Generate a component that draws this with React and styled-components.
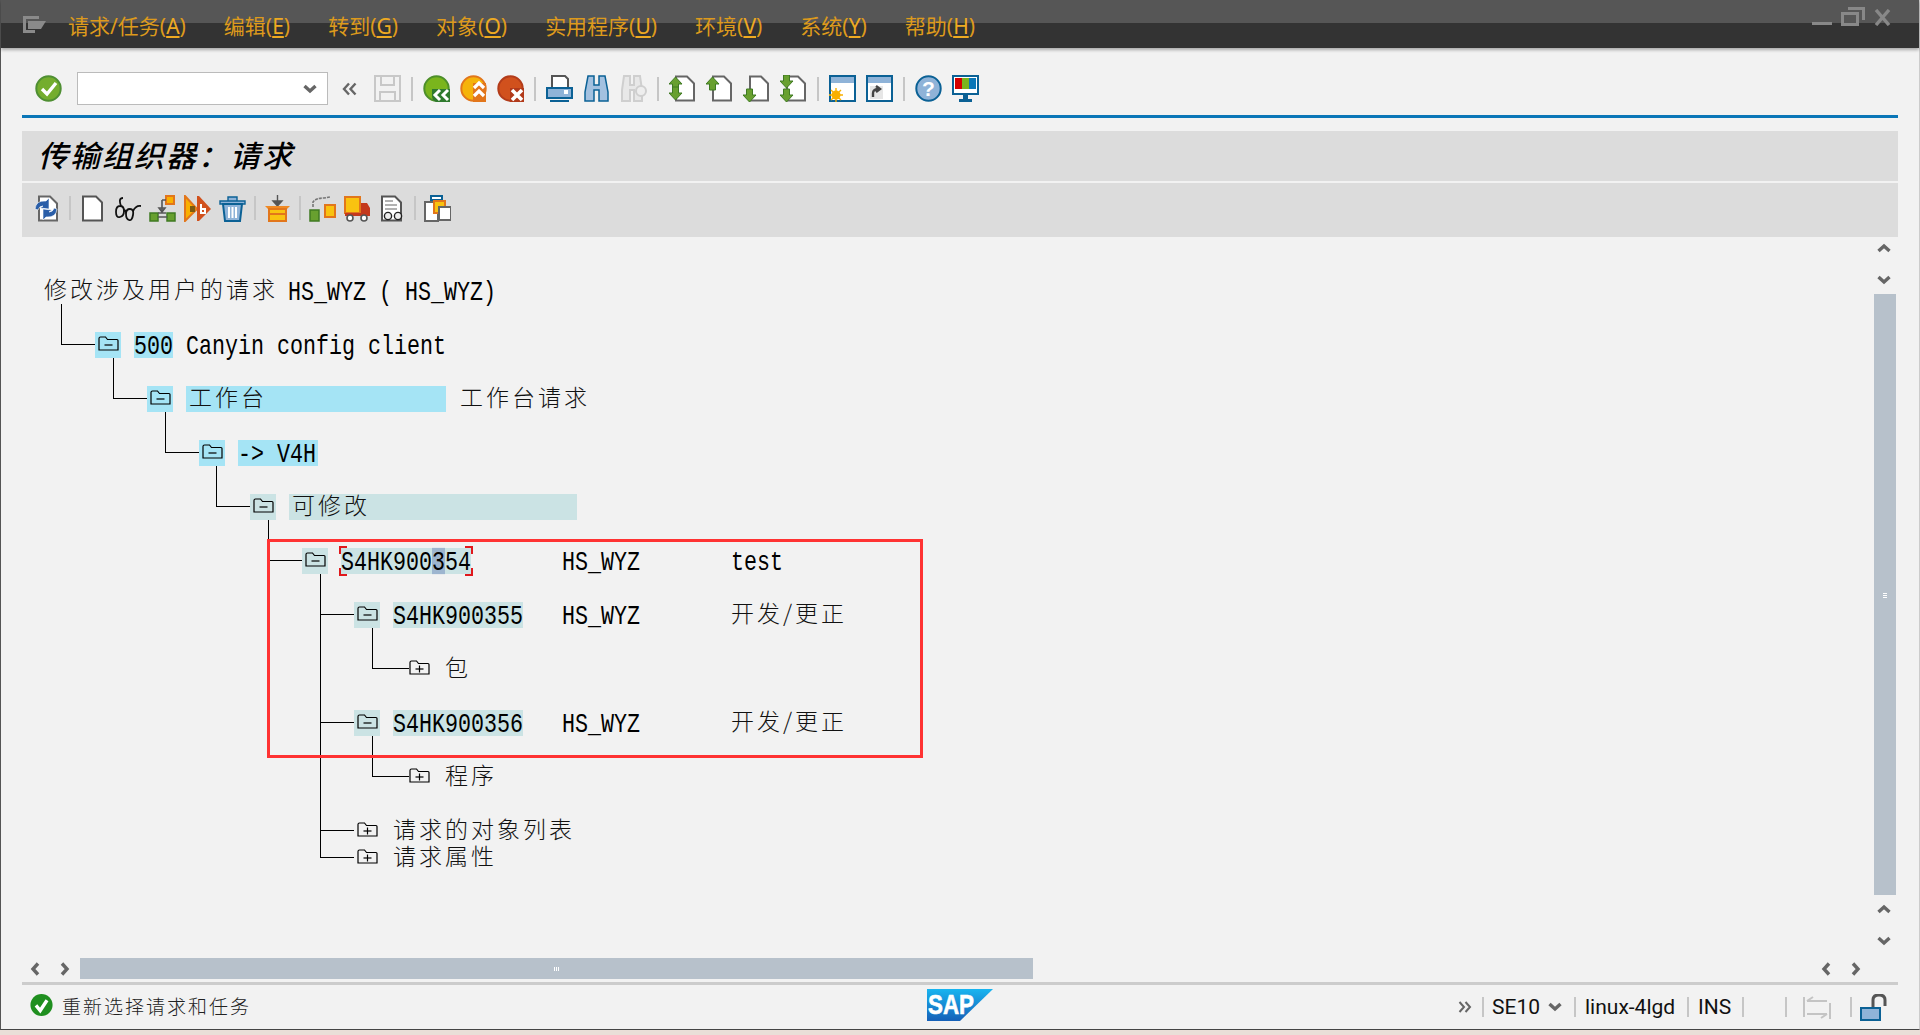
import React from 'react';
import styled, { createGlobalStyle } from 'styled-components';

const GlobalStyle = createGlobalStyle`
  html, body {
    margin: 0;
    padding: 0;
    height: 100%;
    overflow: hidden;
    background: #eadfd8;
    font-family: "Noto Sans", "Noto Sans CJK SC", sans-serif;
  }
`;

const Window = styled.div`
  display: flex;
  flex-direction: column;
  box-sizing: border-box;
  height: 1030px;
  background: #f2f2f2;
  border-left: 1px solid #555;
  border-right: 1px solid #ccc;
  border-bottom: 1px solid #444;
`;

const MenuBar = styled.div`
  display: flex;
  align-items: center;
  flex: 0 0 48px;
  box-sizing: border-box;
  padding: 0 0 0 21px;
  background: linear-gradient(#565656 0, #565656 23px, #333 23px, #333 100%);
  box-shadow: 0 2px 3px rgba(0, 0, 0, 0.3);
`;

const MenuItems = styled.nav`
  display: flex;
  gap: 38px;
  margin-left: 22px;
  margin-top: 4px;
`;

const MenuItem = styled.span`
  font-size: 21px;
  line-height: 28px;
  color: #dd9a1c;
  white-space: nowrap;

  u {
    color: #eeaa22;
    text-underline-offset: 2px;
  }
`;

const WindowControls = styled.div`
  display: flex;
  align-items: flex-end;
  margin-left: auto;
  gap: 9px;
  padding: 0 28px 15px 0;
`;

const Toolbar = styled.div`
  display: flex;
  align-items: center;
  flex: 0 0 67px;
  box-sizing: border-box;
  padding: 14px 0 0 34px;
  gap: 10px;
`;

const ComboBox = styled.div`
  display: flex;
  align-items: center;
  justify-content: flex-end;
  box-sizing: border-box;
  width: 251px;
  height: 33px;
  margin-left: 5px;
  padding-right: 10px;
  background: #fff;
  border: 1px solid #bbb;
`;

const Rewind = styled.span`
  display: flex;
  margin: 0 7px 0 4px;
`;

const Rule = styled.div`
  flex: 0 0 3px;
  margin: 0 21px;
  background: #0a76b7;
`;

const TitleBand = styled.h1`
  flex: 0 0 50px;
  margin: 13px 21px 2px;
  padding-left: 16px;
  background: #dcdcdc;
  font-size: 30px;
  line-height: 50px;
  font-weight: 500;
  font-style: italic;
  letter-spacing: 2px;
  color: #000;
`;

const AppToolbar = styled.div`
  display: flex;
  align-items: center;
  flex: 0 0 54px;
  box-sizing: border-box;
  margin: 0 21px;
  padding: 0 0 4px 12px;
  gap: 8px;
  background: #dcdcdc;
`;

const Separator = styled.span`
  flex: 0 0 2px;
  height: ${({ $h }) => $h || 24}px;
  margin-left: ${({ $ml }) => $ml || 0}px;
  margin-right: ${({ $mr }) => $mr || 0}px;
  background: #c6c6c6;
`;

const Glyph = styled.svg`
  flex: none;
  display: block;
  width: ${({ $w }) => $w || 27}px;
  height: ${({ $h }) => $h || 27}px;
`;

const Body = styled.div`
  display: flex;
  flex: 1;
  min-height: 0;
`;

const Tree = styled.div`
  position: relative;
  flex: 1;
  padding-top: 27px;
`;

const RedBox = styled.div`
  position: absolute;
  left: 266px;
  top: 302px;
  width: 650px;
  height: 213px;
  border: 3px solid #f33;
`;

const Row = styled.div`
  position: relative;
  display: flex;
  align-items: center;
  box-sizing: border-box;
  height: ${({ $h }) => $h || 54}px;
  margin-top: ${({ $mt }) => $mt || 0}px;
  padding-left: ${({ $x }) => $x}px;
  white-space: nowrap;
`;

const Elbow = styled.span`
  position: absolute;
  left: ${({ $x }) => $x - 34}px;
  bottom: 50%;
  width: ${({ $w }) => $w || 33}px;
  height: ${({ $up }) => $up}px;
  border-left: 1px solid #000;
  border-bottom: 1px solid #000;
`;

const FolderCell = styled.span`
  display: flex;
  align-items: center;
  justify-content: center;
  flex: 0 0 26px;
  box-sizing: border-box;
  height: 26px;
  margin-right: 13px;
  padding-bottom: 3px;
  background: ${({ $bg }) => $bg || 'transparent'};
`;

const Slot = styled.span`
  display: inline-flex;
  flex: 0 0 ${({ $w }) => $w}px;
`;

const Label = styled.span`
  position: relative;
  display: inline-flex;
  align-items: center;
  height: 26px;
  width: ${({ $w }) => ($w ? `${$w}px` : 'auto')};
  background: ${({ $bg }) => $bg || 'transparent'};
  padding-left: ${({ $pl }) => $pl || 0}px;
  box-sizing: border-box;
`;

const Mono = styled.span`
  display: inline-block;
  font-family: "Liberation Mono", monospace;
  font-size: 21.67px;
  line-height: 21px;
  color: #000;
  white-space: pre;
  transform: translateY(2px) scaleY(1.25);
`;

const HeadMono = styled(Mono)`
  margin-left: -3px;
`;

const Han = styled.span`
  font-family: "Noto Sans CJK SC", sans-serif;
  font-size: 23px;
  line-height: 26px;
  font-weight: 300;
  letter-spacing: 3px;
  color: #111;
  margin-bottom: 6px;
`;

const Caret = styled.span`
  position: relative;
  display: inline-block;
  height: 21px;

  &::before {
    content: "";
    position: absolute;
    left: 0;
    right: 0;
    top: -1.6px;
    bottom: 1.6px;
    z-index: -1;
    background: #9db5cf;
  }
`;

const FocusMark = styled.span`
  position: absolute;
  left: -2px;
  right: -2px;
  top: -2px;
  bottom: -2px;
  --c: #e0181c;
  background:
    linear-gradient(var(--c), var(--c)) 0 0 / 8px 2px,
    linear-gradient(var(--c), var(--c)) 0 0 / 2px 8px,
    linear-gradient(var(--c), var(--c)) 100% 0 / 8px 2px,
    linear-gradient(var(--c), var(--c)) 100% 0 / 2px 8px,
    linear-gradient(var(--c), var(--c)) 0 100% / 8px 2px,
    linear-gradient(var(--c), var(--c)) 0 100% / 2px 8px,
    linear-gradient(var(--c), var(--c)) 100% 100% / 8px 2px,
    linear-gradient(var(--c), var(--c)) 100% 100% / 2px 8px;
  background-repeat: no-repeat;
`;

const VScroll = styled.div`
  display: flex;
  flex-direction: column;
  align-items: center;
  flex: 0 0 45px;
  box-sizing: border-box;
  padding: 6px 23px 0 0;
`;

const ChevronPair = styled.div`
  display: flex;
  flex-direction: ${({ $row }) => ($row ? 'row' : 'column')};
  align-items: center;
  gap: ${({ $gap }) => $gap}px;
  margin-right: ${({ $mr }) => $mr || 0}px;
`;

const VThumb = styled.div`
  display: flex;
  align-items: center;
  justify-content: center;
  flex: 0 0 601px;
  width: 22px;
  margin: 9px 0;
  background: #b7c1cb;
`;

const ScrollRow = styled.div`
  display: flex;
  align-items: center;
  flex: 0 0 21px;
  padding-left: 29px;
`;

const HThumb = styled.div`
  display: flex;
  align-items: center;
  justify-content: center;
  flex: 0 0 953px;
  height: 21px;
  margin-left: 10px;
  background: #b7c1cb;
`;

const RowEnd = styled.div`
  margin-left: auto;
  padding-right: 58px;
`;

const Grip = styled.span`
  width: ${({ $v }) => ($v ? 4 : 6)}px;
  height: ${({ $v }) => ($v ? 6 : 4)}px;
  background: repeating-linear-gradient(
    ${({ $v }) => ($v ? '0deg' : '90deg')},
    #fff 0 1px,
    #b7c1cb 1px 2px
  );
`;

const StatusRule = styled.div`
  flex: 0 0 3px;
  margin: 3px 21px 0;
  background: #ccc;
`;

const StatusBar = styled.div`
  display: flex;
  align-items: center;
  flex: 0 0 44px;
  box-sizing: border-box;
  padding: 0 31px 4px 29px;
`;

const StatusText = styled.span`
  margin-left: 9px;
  font-family: "Noto Sans CJK SC", sans-serif;
  font-size: 19px;
  letter-spacing: 2px;
  font-weight: 300;
  color: #222;
`;

const LogoSlot = styled.div`
  margin-left: 676px;
  height: 32px;
`;

const StatusRight = styled.div`
  display: flex;
  align-items: center;
  margin-left: auto;
  margin-top: 4px;
  font-family: Roboto, sans-serif;
  font-size: 21px;
  color: #111;
`;

const StatusField = styled.span`
  flex: none;
  width: ${({ $w }) => $w}px;
  margin-left: ${({ $l }) => $l}px;
  margin-right: ${({ $r }) => $r || 0}px;
  line-height: 28px;
  white-space: nowrap;
`;

const Ico = ({ children, w, h, vb }) => (
  <Glyph $w={w} $h={h} viewBox={vb || `0 0 ${w || 27} ${h || 27}`}>{children}</Glyph>
);

const Ball = ({ fill, edge }) => <circle cx="13.5" cy="13.5" r="12.2" fill={fill} stroke={edge} strokeWidth="2" />;

const Doc = ({ edge = '#666', x = 7 }) => (
  <path d={`M${x} 1.5h11l7 7v17h-18z`} fill="#fff" stroke={edge} strokeWidth="2" />
);

const UpArrow = ({ x, y, flip }) => (
  <path
    d={flip ? `M${x} ${y}l6.5 7 6.5-7h-3.5v-6h-6v6z` : `M${x} ${y}l6.5-7 6.5 7h-3.5v6h-6v-6z`}
    fill="#68a02f"
    stroke="#3f7a22"
    strokeWidth="1"
  />
);

const icons = {
  check: (
    <>
      <Ball fill="#74ad2e" edge="#4f8f33" />
      <path d="M7 14l5 5 9-11" fill="none" stroke="#fff" strokeWidth="3.4" />
    </>
  ),
  back: (
    <>
      <Ball fill="#7ab51d" edge="#4d8f2a" />
      <path d="M9 14h18v13H13q-4-2-4-6z" fill="#2f7a2e" />
      <path d="M17 15l-5 5 5 5M25 15l-5 5 5 5" fill="none" stroke="#fff" strokeWidth="3" />
    </>
  ),
  exit: (
    <>
      <Ball fill="#f5b30a" edge="#e2761b" />
      <path d="M13 8h13v19H13z" fill="#e2761b" />
      <path d="M14 13l5-5 5 5M14 21l5-5 5 5" fill="none" stroke="#fff" strokeWidth="3.2" />
    </>
  ),
  cancel: (
    <>
      <Ball fill="#d1511d" edge="#b33c1a" />
      <path d="M13 13h14v14H13z" fill="#b23a1a" />
      <path d="M15 15l10 10M25 15l-10 10" stroke="#fff" strokeWidth="3.6" />
    </>
  ),
  save: (
    <path
      d="M1 1h25v25H1zM7 2v8h13V2M6 26V17h15v9"
      fill="none"
      stroke="#c8c8c8"
      strokeWidth="2"
    />
  ),
  print: (
    <>
      <path d="M6 1h13l3 3v9H6z" fill="#fff" stroke="#555" strokeWidth="2" />
      <path d="M1 13h25v10H1z" fill="#8fb3d8" stroke="#0b6195" strokeWidth="2" />
      <path d="M18 15h4v4h-4z" fill="#fff" />
      <path d="M4 25h19v2H4z" fill="#0b6195" />
    </>
  ),
  find: (
    <path
      d="M5 1h6v9h5V1h6l3 16v9h-9V15h-5v11H2v-9z"
      fill="#a3c1e0"
      stroke="#0b6195"
      strokeWidth="1.5"
    />
  ),
  findNext: (
    <>
      <path d="M4 1h6v9h4V1h6l2 14v11h-8V15h-4v11H2V15z" fill="#e8e8e8" stroke="#cfcfcf" strokeWidth="2" />
      <circle cx="21" cy="16" r="5" fill="#eee" stroke="#cfcfcf" strokeWidth="2" />
    </>
  ),
  pageBoth: (
    <>
      <Doc />
      <UpArrow x={0} y={9} />
      <UpArrow x={0} y={18} flip />
    </>
  ),
  pageUp: (
    <>
      <Doc />
      <UpArrow x={0} y={9} />
    </>
  ),
  pageDown: (
    <>
      <Doc />
      <UpArrow x={0} y={20} flip />
    </>
  ),
  pageEnds: (
    <>
      <Doc />
      <UpArrow x={0} y={6} flip />
      <UpArrow x={0} y={20} flip />
    </>
  ),
  newWindow: (
    <>
      <path d="M1 1h25v25H1z" fill="#fff" stroke="#0b6195" strokeWidth="2" />
      <path d="M2 2h23v6H2z" fill="#8fb3d8" />
      <circle cx="7" cy="20" r="4.5" fill="#f9b000" />
      <path d="M7 13v14M0 20h14M2 15l10 10M12 15L2 25" stroke="#f9b000" strokeWidth="1.4" />
    </>
  ),
  linkWindow: (
    <>
      <path d="M1 1h25v25H1z" fill="#fff" stroke="#0b6195" strokeWidth="2" />
      <path d="M2 2h23v6H2z" fill="#8fb3d8" />
      <path d="M4 11h13v13H4z" fill="#e6e6e6" />
      <path d="M7 22v-4q0-4 6-4M10 11l4 3-4 3" fill="none" stroke="#444" strokeWidth="2.4" />
    </>
  ),
  help: (
    <>
      <Ball fill="#8fb3d8" edge="#0b6195" />
      <text x="13.5" y="21" textAnchor="middle" fontFamily="Liberation Sans" fontWeight="700" fontSize="21" fill="#fff">?</text>
    </>
  ),
  monitor: (
    <>
      <path d="M1 1h25v18H1z" fill="#fff" stroke="#0b6195" strokeWidth="2" />
      <path d="M3 3h7v11H3z" fill="#d40000" />
      <path d="M10 3h7v11h-7z" fill="#7ab51d" />
      <path d="M17 3h7v11h-7z" fill="#0a76b7" />
      <path d="M11 20h5v4h-5zM7 24h13v3H7z" fill="#0b6195" />
    </>
  ),
  refresh: (
    <>
      <Doc x={5} />
      <path d="M1 14q1-9 11-8l3-3v11l-9-1 3-2q-4 0-5 4zM23 14q-1 9-11 8l-3 3v-11l9 1-3 2q4 0 5-4z" fill="#2a5ea8" stroke="#fff" strokeWidth="0.6" />
    </>
  ),
  doc: <path d="M4 1.5h13l6 6v18H4z" fill="#fff" stroke="#555" strokeWidth="2" />,
  glasses: (
    <path
      d="M2 17q0-6 4-6t4 5-4 6-4-5zM12 19q0-5 4-5t3 6-4 5-3-6zM7 11q-3-8 2-8M10 16q2-2 2 3M19 16q3-6 8-5"
      fill="none"
      stroke="#111"
      strokeWidth="1.8"
    />
  ),
  tree: (
    <>
      <path d="M17 1h8v8h-8z" fill="#f9b000" stroke="#e2761b" strokeWidth="2" />
      <path d="M1 18h8v8H1zM18 18h8v8h-8z" fill="#68a02f" stroke="#3f7a22" strokeWidth="1.5" />
      <path d="M13 5h4M13 5v13M9 22h9M9 18h8M10 13h6l-3 4z" fill="none" stroke="#555" strokeWidth="1.6" />
    </>
  ),
  transport: (
    <>
      <path d="M1 1l12 13L1 26z" fill="#f9b000" stroke="#e2761b" strokeWidth="2" />
      <path d="M13 1h2l12 13-12 12h-2z" fill="#d1511d" />
      <path d="M6 11h5v6H6z" fill="#7a5a10" />
      <path d="M17 9v9h4v-4h-4" fill="none" stroke="#fff" strokeWidth="2" />
    </>
  ),
  trash: (
    <>
      <path d="M1 6h25v3H1zM9 2h9v4H9z" fill="#8fb3d8" stroke="#0b6195" strokeWidth="1.4" />
      <path d="M4 9h19l-2 17H6z" fill="#8fb3d8" stroke="#0b6195" strokeWidth="2" />
      <path d="M10 12v11M13.5 12v11M17 12v11" stroke="#fff" strokeWidth="2" />
    </>
  ),
  importBox: (
    <>
      <path d="M13.5 0v9M9 6l4.5 5 4.5-5z" fill="#555" stroke="#555" strokeWidth="1.4" />
      <path d="M1 11h25l-4 4H5z" fill="#f08a24" />
      <path d="M5 14h17v12H5z" fill="#f9c310" stroke="#e2761b" strokeWidth="2" />
      <path d="M6 18h15v2H6z" fill="#e2761b" />
    </>
  ),
  assign: (
    <>
      <path d="M1 15h9v11H1z" fill="#68a02f" stroke="#3f7a22" strokeWidth="1.5" />
      <path d="M16 10h10v12H16z" fill="#f9c310" stroke="#e2761b" strokeWidth="2" />
      <path d="M4 12V7q3-4 11-4l6-1" fill="none" stroke="#777" strokeWidth="1.6" strokeDasharray="3 1" />
    </>
  ),
  truck: (
    <>
      <path d="M1 2h15v16H1z" fill="#f9c310" stroke="#e2761b" strokeWidth="2" />
      <path d="M17 8h6l3 5v8H17zM1 18h17v3H1z" fill="#c4391d" />
      <circle cx="6" cy="23" r="3" fill="#fff" stroke="#555" strokeWidth="1.6" />
      <circle cx="20" cy="23" r="3" fill="#fff" stroke="#555" strokeWidth="1.6" />
    </>
  ),
  docGlasses: (
    <>
      <path d="M3 1.5h13l6 6v18H3z" fill="#fff" stroke="#555" strokeWidth="2" />
      <path d="M6 6h8M6 10h12M6 14h12" stroke="#999" strokeWidth="1.6" />
      <circle cx="9" cy="21" r="3.6" fill="#eee" stroke="#222" strokeWidth="1.4" />
      <circle cx="19" cy="21" r="3.6" fill="#eee" stroke="#222" strokeWidth="1.4" />
    </>
  ),
  copy: (
    <>
      <path d="M1 7h13v19H1z" fill="#fff" stroke="#666" strokeWidth="2" />
      <path d="M7 1h11v4H7z" fill="#fff" stroke="#0b6195" strokeWidth="2" />
      <path d="M10 6h11v12H10z" fill="#f9c310" stroke="#e2761b" strokeWidth="2" />
      <path d="M15 12h12v13H15z" fill="#fff" stroke="#666" strokeWidth="2" />
    </>
  ),
};

const Icon = ({ name }) => <Ico>{icons[name]}</Ico>;

const Chevron = ({ dir, color = '#666' }) => {
  const paths = {
    up: 'M1.5 8L7 3l5.5 5',
    down: 'M1.5 2L7 7l5.5-5',
    left: 'M8 1.5L3 7l5 5.5',
    right: 'M3 1.5L8 7l-5 5.5',
  };
  const flat = dir === 'up' || dir === 'down';
  return (
    <Ico w={flat ? 14 : 11} h={flat ? 10 : 14}>
      <path d={paths[dir]} fill="none" stroke={color} strokeWidth="3.4" />
    </Ico>
  );
};

const Folder = ({ open }) => (
  <Ico w={21} h={15}>
    <path d="M1 14V2.500q0-1.500 1.500-1.500h5l2 2.500h9.500q1 0 1 1V14z" fill="none" stroke="#000" strokeWidth="1.2" />
    <path d="M6.500 9h8" stroke="#000" strokeWidth="1.200" />
    {!open && <path d="M10.500 5.500v7" stroke="#000" strokeWidth="1.200" />}
  </Ico>
);

const menus = [
  ['请求/任务(', 'A'],
  ['编辑(', 'E'],
  ['转到(', 'G'],
  ['对象(', 'O'],
  ['实用程序(', 'U'],
  ['环境(', 'V'],
  ['系统(', 'Y'],
  ['帮助(', 'H'],
];

const CYAN = '#a5e4f5';
const TEAL = '#cbe3e4';
const levelX = level => Math.round(94 + 51.8 * (level - 1));

const Owner = () => (
  <Slot $w={169}>
    <Mono>HS_WYZ</Mono>
  </Slot>
);

const App = () => (
  <>
    <GlobalStyle />
    <Window>
      <MenuBar>
        <Ico w={24} h={19}>
          <path d="M1 1h16v3H4v11h9v3H1z" fill="#8a8a8a" />
          <path d="M6 6h18l-5 8H6z" fill="#8a8a8a" />
        </Ico>
        <MenuItems>
          {menus.map(([text, key]) => (
            <MenuItem key={key}>
              {text}
              <u>{key}</u>)
            </MenuItem>
          ))}
        </MenuItems>
        <WindowControls>
          <Ico w={20} h={4}><path d="M0 0h20v3H0z" fill="#888" /></Ico>
          <Ico w={24} h={19}>
            <path d="M7 1.500h15.500V13M1.500 6.500h15v11h-15z" fill="none" stroke="#888" strokeWidth="3" />
          </Ico>
          <Ico w={17} h={17}>
            <path d="M2 1l13 15M15 1L2 16" stroke="#888" strokeWidth="3.400" />
          </Ico>
        </WindowControls>
      </MenuBar>

      <Toolbar>
        <Icon name="check" />
        <ComboBox><Chevron dir="down" /></ComboBox>
        <Rewind>
          <Ico w={15} h={14}>
            <path d="M7 1.500L2 7l5 5.500M13.500 1.500L8.500 7l5 5.500" fill="none" stroke="#666" strokeWidth="2.400" />
          </Ico>
        </Rewind>
        <Icon name="save" />
        <Separator />
        <Icon name="back" />
        <Icon name="exit" />
        <Icon name="cancel" />
        <Separator />
        <Icon name="print" />
        <Icon name="find" />
        <Icon name="findNext" />
        <Separator />
        <Icon name="pageBoth" />
        <Icon name="pageUp" />
        <Icon name="pageDown" />
        <Icon name="pageEnds" />
        <Separator />
        <Icon name="newWindow" />
        <Icon name="linkWindow" />
        <Separator />
        <Icon name="help" />
        <Icon name="monitor" />
      </Toolbar>
      <Rule />

      <TitleBand>传输组织器：请求</TitleBand>
      <AppToolbar>
        <Icon name="refresh" />
        <Separator />
        <Icon name="doc" />
        <Icon name="glasses" />
        <Icon name="tree" />
        <Icon name="transport" />
        <Icon name="trash" />
        <Separator />
        <Icon name="importBox" />
        <Separator />
        <Icon name="assign" />
        <Icon name="truck" />
        <Icon name="docGlasses" />
        <Separator />
        <Icon name="copy" />
      </AppToolbar>

      <Body>
        <Tree>
          <Row $x={43}>
            <Han>修改涉及用户的请求</Han>
            <HeadMono> HS_WYZ ( HS_WYZ)</HeadMono>
          </Row>
          <Row $x={levelX(1)}>
            <Elbow $x={levelX(1)} $up={40} />
            <FolderCell $bg={CYAN}><Folder open /></FolderCell>
            <Label $bg={CYAN}><Mono>500</Mono></Label>
            <Mono> Canyin config client</Mono>
          </Row>
          <Row $x={levelX(2)}>
            <Elbow $x={levelX(2)} $up={40} />
            <FolderCell $bg={CYAN}><Folder open /></FolderCell>
            <Label $bg={CYAN} $w={260} $pl={3}><Han>工作台</Han></Label>
            <Label $pl={14}><Han>工作台请求</Han></Label>
          </Row>
          <Row $x={levelX(3)}>
            <Elbow $x={levelX(3)} $up={40} />
            <FolderCell $bg={CYAN}><Folder open /></FolderCell>
            <Label $bg={CYAN} $w={80}><Mono>-&gt; V4H</Mono></Label>
          </Row>
          <Row $x={levelX(4)}>
            <Elbow $x={levelX(4)} $up={40} />
            <FolderCell $bg={TEAL}><Folder open /></FolderCell>
            <Label $bg={TEAL} $w={288} $pl={3}><Han>可修改</Han></Label>
          </Row>
          <Row $x={levelX(5)}>
            <Elbow $x={levelX(5)} $up={40} />
            <FolderCell $bg={TEAL}><Folder open /></FolderCell>
            <Slot $w={221}>
              <Label $bg={TEAL} $w={130}>
                <FocusMark />
                <Mono>S4HK900<Caret>3</Caret>54</Mono>
              </Label>
            </Slot>
            <Owner />
            <Mono>test</Mono>
          </Row>
          <Row $x={levelX(6)}>
            <Elbow $x={levelX(6)} $up={1} />
            <FolderCell $bg={TEAL}><Folder open /></FolderCell>
            <Slot $w={169}>
              <Label $bg={TEAL} $w={130}><Mono>S4HK900355</Mono></Label>
            </Slot>
            <Owner />
            <Han>开发/更正</Han>
          </Row>
          <Row $x={levelX(7)}>
            <Elbow $x={levelX(7)} $up={40} $w={36} />
            <FolderCell><Folder /></FolderCell>
            <Han>包</Han>
          </Row>
          <Row $x={levelX(6)}>
            <Elbow $x={levelX(6)} $up={1} />
            <FolderCell $bg={TEAL}><Folder open /></FolderCell>
            <Slot $w={169}>
              <Label $bg={TEAL} $w={130}><Mono>S4HK900356</Mono></Label>
            </Slot>
            <Owner />
            <Han>开发/更正</Han>
          </Row>
          <Row $x={levelX(7)}>
            <Elbow $x={levelX(7)} $up={40} $w={36} />
            <FolderCell><Folder /></FolderCell>
            <Han>程序</Han>
          </Row>
          <Row $x={levelX(6)} $h={27} $mt={13}>
            <Elbow $x={levelX(6)} $up={1} />
            <FolderCell><Folder /></FolderCell>
            <Han>请求的对象列表</Han>
          </Row>
          <Row $x={levelX(6)} $h={27}>
            <Elbow $x={levelX(6)} $up={283} />
            <FolderCell><Folder /></FolderCell>
            <Han>请求属性</Han>
          </Row>
          <RedBox />
        </Tree>
        <VScroll>
          <ChevronPair $gap={22} $mr={2}>
            <Chevron dir="up" />
            <Chevron dir="down" />
          </ChevronPair>
          <VThumb><Grip $v /></VThumb>
          <ChevronPair $gap={22} $mr={2}>
            <Chevron dir="up" />
            <Chevron dir="down" />
          </ChevronPair>
        </VScroll>
      </Body>

      <ScrollRow>
        <ChevronPair $row $gap={18}>
          <Chevron dir="left" />
          <Chevron dir="right" />
        </ChevronPair>
        <HThumb><Grip /></HThumb>
        <RowEnd>
          <ChevronPair $row $gap={18}>
            <Chevron dir="left" />
            <Chevron dir="right" />
          </ChevronPair>
        </RowEnd>
      </ScrollRow>
      <StatusRule />

      <StatusBar>
        <Ico w={23} h={24} vb="0 0 27 27">
          <circle cx="13.5" cy="13.5" r="13" fill="#1f8f1f" />
          <path d="M7 14l5 6 8-12" fill="none" stroke="#fff" strokeWidth="4" />
        </Ico>
        <StatusText>重新选择请求和任务</StatusText>
        <LogoSlot>
          <Ico w={66} h={32}>
            <defs>
              <linearGradient id="sapBlue" x1="0" y1="0" x2="0" y2="1">
                <stop offset="0" stopColor="#19b5f0" />
                <stop offset="1" stopColor="#1560b8" />
              </linearGradient>
            </defs>
            <path d="M0 0h66L33 32H0z" fill="url(#sapBlue)" />
            <text x="1" y="25" fontFamily="Liberation Sans" fontWeight="700" fontSize="27" textLength="46" lengthAdjust="spacingAndGlyphs" stroke="#fff" strokeWidth="0.6" fill="#fff">SAP</text>
          </Ico>
        </LogoSlot>
        <StatusRight>
          <Ico w={14} h={12}>
            <path d="M1.500 1L6 6l-4.500 5M7.500 1L12 6l-4.500 5" fill="none" stroke="#666" strokeWidth="2" />
          </Ico>
          <Separator $h={20} $ml={10} />
          <StatusField $l={8} $w={46} $r={10}>SE10</StatusField>
          <Chevron dir="down" />
          <Separator $h={20} $ml={12} />
          <StatusField $l={9} $w={90}>linux-4lgd</StatusField>
          <Separator $h={20} $ml={12} />
          <StatusField $l={9} $w={33}>INS</StatusField>
          <Separator $h={20} $ml={11} />
          <Separator $h={20} $ml={41} $mr={16} />
          <Ico w={28} h={24}>
            <path d="M1 2v20M27 8v16M4 6h20M4 19h20M4 6l6-4M24 19l-6 4" fill="none" stroke="#c4c4c4" strokeWidth="2" />
          </Ico>
          <Separator $h={20} $ml={19} $mr={8} />
          <Ico w={28} h={27}>
            <path d="M13 13V6q0-5 6-5t6 5v6" fill="none" stroke="#555" strokeWidth="3" />
            <path d="M1 14h19v12H1z" fill="#8fb3d8" stroke="#0b6195" strokeWidth="2" />
          </Ico>
        </StatusRight>
      </StatusBar>
    </Window>
  </>
);

export default App;
